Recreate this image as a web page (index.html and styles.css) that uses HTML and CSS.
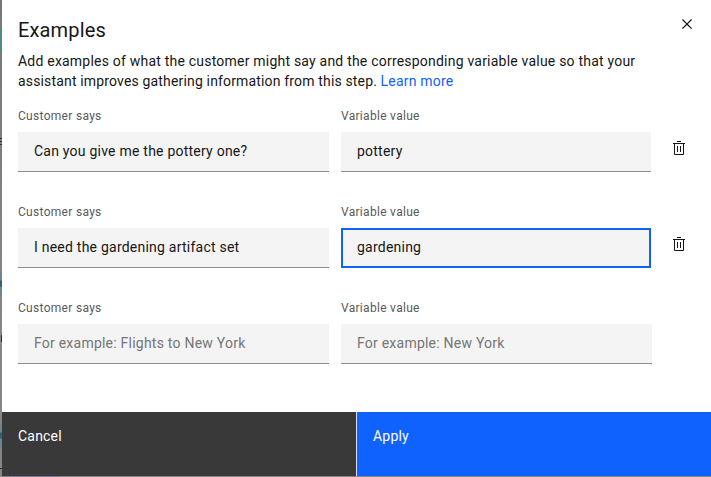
FILE: index.html
```html
<!DOCTYPE html>
<html lang="en">
<head>
<meta charset="utf-8">
<title>Examples</title>
<link rel="stylesheet" href="styles.css">
</head>
<body>
<svg width="0" height="0" class="defs" aria-hidden="true">
  <symbol id="trash" viewBox="0 0 32 32"><path d="M12 12h2v12h-2zM18 12h2v12h-2zM4 6v2h2v20a2 2 0 0 0 2 2h16a2 2 0 0 0 2-2V8h2V6zM8 28V8h16v20zM12 2h8v2h-8z"/></symbol>
</svg>
<div class="backdrop" aria-hidden="true">
  <i class="teal"></i><i class="rule r1"></i><i class="rule r2"></i><i class="rule r3"></i><i class="blue b1"></i><i class="rule r4"></i><i class="blue b2"></i><i class="rule r5"></i><i class="under"></i>
</div>
<main class="modal">
  <section class="content">
    <header class="header">
      <h1>Examples</h1>
      <button class="close" aria-label="Close"><svg width="20" height="20" viewBox="0 0 32 32"><path d="M24 9.4 22.6 8 16 14.6 9.4 8 8 9.4l6.6 6.6L8 22.6 9.4 24l6.6-6.6 6.6 6.6 1.4-1.4-6.6-6.6z"/></svg></button>
    </header>
    <p class="intro"><span class="line1">Add examples of what the customer might say and the corresponding variable value so that your</span><br><span class="line2">assistant improves gathering information from this step.</span> <a href="#">Learn more</a></p>
    <div class="row">
      <div class="field"><label>Customer says</label><div class="input"><span>Can you give me the pottery one?</span></div></div>
      <div class="field"><label>Variable value</label><div class="input"><span>pottery</span></div></div>
      <button class="delete" aria-label="Delete"><svg width="16" height="16"><use href="#trash"/></svg></button>
    </div>
    <div class="row">
      <div class="field"><label>Customer says</label><div class="input"><span>I need the gardening artifact set</span></div></div>
      <div class="field"><label>Variable value</label><div class="input focused"><span>gardening</span></div></div>
      <button class="delete" aria-label="Delete"><svg width="16" height="16"><use href="#trash"/></svg></button>
    </div>
    <div class="row last">
      <div class="field"><label>Customer says</label><div class="input placeholder"><span>For example: Flights to New York</span></div></div>
      <div class="field"><label>Variable value</label><div class="input placeholder"><span>For example: New York</span></div></div>
    </div>
  </section>
  <footer class="footer">
    <button class="cancel">Cancel</button>
    <button class="apply">Apply</button>
  </footer>
</main>
</body>
</html>
```
FILE: styles.css
```css
* { box-sizing: border-box; }
body { margin: 0; width: 711px; height: 477px; overflow: hidden; background: #858585; font-family: Roboto, "Liberation Sans", sans-serif; font-size: 14px; font-weight: 400; color: #161616; }
button { border: 0; padding: 0; background: none; font: inherit; color: inherit; text-align: left; }
svg { display: block; fill: currentColor; }
.defs { position: absolute; }
.backdrop { position: absolute; inset: 0; background: linear-gradient(#777, #878787 70%, #858585); }
.backdrop i { position: absolute; left: 0; width: 2px; }
.teal { top: 28px; height: 24px; background: #50898b; }
.rule { height: 1px; background: #303030; }
.r1 { top: 138px; }
.r2 { top: 141px; }
.r3 { top: 144px; }
.blue { background: linear-gradient(#718491 35%, #315f7c 36% 60%, #718491 61%); }
.b1 { top: 272px; height: 24px; }
.r4 { top: 335px; height: 7px; }
.backdrop .r4 { left: 1px; width: 1px; }
.b2 { top: 424px; height: 24px; }
.r5 { top: 468px; }
.backdrop .under { left: 9px; top: 476px; width: 51px; height: 1px; background: #777794; }
.modal { position: relative; margin-left: 2px; width: 709px; height: 476px; background: #fff; display: flex; flex-direction: column; }
.content { flex: 1; padding: 14px 16px 0; }
.header { display: flex; justify-content: space-between; height: 37px; }
h1 { margin: 3px 0 0; font-size: 20px; line-height: 26px; font-weight: 400; letter-spacing: .15px; }
.close { width: 20px; height: 20px; margin-right: -2px; }
.intro { margin: 0; height: 55px; line-height: 20px; white-space: nowrap; }
.line1 { letter-spacing: .213px; }
.line2 { letter-spacing: .16px; }
a { color: #0f62fe; text-decoration: none; letter-spacing: .2px; }
.row { display: grid; grid-template-columns: 311px 310px 16px; column-gap: 12px; height: 96px; }
.row.last { grid-template-columns: 311px 311px; }
label { display: block; height: 26px; padding-top: 1px; font-size: 12px; line-height: 18px; color: #5a5a5a; letter-spacing: .3px; }
.input { height: 40px; padding: 0 16px; line-height: 39px; background: #f4f4f4; border-bottom: 1px solid #8d8d8d; white-space: nowrap; letter-spacing: .23px; }
.input.focused { border: 0; outline: 2px solid #0f62fe; outline-offset: -2px; }
.input.placeholder { color: #757575; }
.delete { width: 16px; height: 16px; margin: 34px 0 0 8px; }
.footer { display: grid; grid-template-columns: 354px 354px; column-gap: 1px; height: 64px; background: #e0e0e0; }
.footer button { display: block; padding: 14px 16px 30px; line-height: 20px; color: #fff; letter-spacing: .2px; }
.footer .cancel { background: #393939; }
.footer .apply { background: #0f62fe; }
```
